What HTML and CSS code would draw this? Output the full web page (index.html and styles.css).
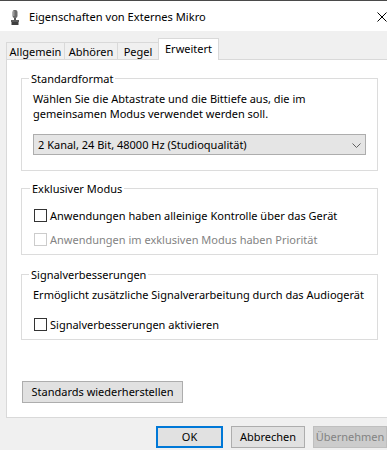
FILE: index.html
```html
<!DOCTYPE html>
<html lang="de">
<head>
<meta charset="utf-8">
<title>Eigenschaften von Externes Mikro</title>
<link rel="stylesheet" href="styles.css">
</head>
<body>
<div class="window">
  <div class="topline"></div>
  <div class="titlebar">
    <svg class="appicon" width="8" height="15" viewBox="0 0 8 15">
      <rect x="1.5" y="0" width="5" height="8" rx="2" fill="#6b6b6b"/>
      <rect x="2" y="1" width="1.5" height="5" fill="#9a9a9a"/>
      <rect x="3" y="8" width="2" height="3" fill="#555"/>
      <rect x="0" y="10" width="8" height="2" fill="#5a5a5a"/>
      <rect x="0.5" y="12" width="7" height="3" fill="#3e3e3e"/>
    </svg>
    <span class="title">Eigenschaften von Externes Mikro</span>
    <svg class="close" width="10" height="10" viewBox="0 0 10 10">
      <path d="M0.5 0.5 L9.5 9.5 M9.5 0.5 L0.5 9.5" stroke="#000" stroke-width="1" fill="none"/>
    </svg>
  </div>
  <div class="tabs">
    <div class="tab t1">Allgemein</div>
    <div class="tab t2">Abhören</div>
    <div class="tab t3">Pegel</div>
    <div class="tab t4 active">Erweitert</div>
  </div>
  <div class="panel">
    <div class="group g1">
      <div class="legend">Standardformat</div>
      <p class="desc">Wählen Sie die Abtastrate und die Bittiefe aus, die im<br>gemeinsamen Modus verwendet werden soll.</p>
      <div class="select">
        <span>2 Kanal, 24 Bit, 48000 Hz (Studioqualität)</span>
        <svg class="chev" width="9" height="5" viewBox="0 0 9 5"><path d="M0.5 0.5 L4.5 4.5 L8.5 0.5" stroke="#606060" stroke-width="1" fill="none"/></svg>
      </div>
    </div>
    <div class="group g2">
      <div class="legend">Exklusiver Modus</div>
      <div class="check first"><span class="box"></span><span>Anwendungen haben alleinige Kontrolle über das Gerät</span></div>
      <div class="check disabled"><span class="box"></span><span>Anwendungen im exklusiven Modus haben Priorität</span></div>
    </div>
    <div class="group g3">
      <div class="legend">Signalverbesserungen</div>
      <p class="desc single">Ermöglicht zusätzliche Signalverarbeitung durch das Audiogerät</p>
      <div class="check c3"><span class="box"></span><span>Signalverbesserungen aktivieren</span></div>
    </div>
    <button class="btn restore">Standards wiederherstellen</button>
  </div>
  <div class="footer">
    <button class="btn ok">OK</button>
    <button class="btn cancel">Abbrechen</button>
    <button class="btn apply" disabled>Übernehmen</button>
  </div>
</div>
</body>
</html>
```

FILE: styles.css
```css
html, body {
  margin: 0;
  padding: 0;
}
body {
  width: 387px;
  height: 450px;
  overflow: hidden;
  background: #f0f0f0;
  font-family: "Noto Sans", "Open Sans", sans-serif;
  font-size: 11px;
  color: #000;
}
.window {
  width: 387px;
  height: 450px;
  overflow: hidden;
}
.topline {
  height: 1px;
  background: #4a4a4a;
}
.titlebar {
  height: 30px;
  background: #fff;
  display: flex;
  align-items: center;
}
.appicon {
  margin-left: 11px;
  margin-top: 2px;
  flex: none;
}
.title {
  margin-left: 10px;
  font-size: 11.1px;
  flex: 1;
  white-space: nowrap;
}
.close {
  flex: none;
  margin-top: 2px;
  width: 10px;
}
.tabs {
  display: flex;
  align-items: flex-end;
  height: 20px;
  padding-top: 8px;
  margin-left: 6px;
}
.tab {
  box-sizing: border-box;
  height: 17px;
  border: 1px solid #d9d9d9;
  border-bottom: none;
  background: #f0f0f0;
  text-align: center;
  line-height: 17px;
  white-space: nowrap;
}
.t1 { width: 59px; }
.t2 { width: 54px; margin-left: -1px; }
.t3 { width: 42px; margin-left: -1px; }
.tab.active {
  width: 61px;
  margin-left: -1px;
  height: 22px;
  margin-bottom: -1px;
  background: #fff;
  position: relative;
  z-index: 1;
  line-height: 19px;
}
.panel {
  box-sizing: border-box;
  width: 420px;
  height: 359px;
  margin-left: 6px;
  background: #fff;
  border: 1px solid #d9d9d9;
  padding-left: 14px;
  overflow: hidden;
}
.group {
  box-sizing: border-box;
  width: 357px;
  border: 1px solid #dcdcdc;
  padding: 0 11px 0 11px;
}
.legend {
  width: max-content;
  height: 15px;
  line-height: 15px;
  margin: -8px 0 0 -4px;
  padding: 0 2px;
  background: #fff;
}
.desc {
  margin: 5px 0 0 0;
  line-height: 15px;
  white-space: nowrap;
}
.g1 {
  margin-top: 18px;
  padding-bottom: 15px;
}
.select {
  box-sizing: border-box;
  margin-top: 13px;
  height: 21px;
  background: #e5e5e5;
  border: 1px solid #adadad;
  display: flex;
  align-items: center;
  justify-content: space-between;
  padding: 0 4px 0 4px;
  white-space: nowrap;
}
.chev {
  margin-top: 1px;
}
.g2 {
  margin-top: 17px;
  padding-left: 12px;
  padding-bottom: 3px;
}
.check {
  height: 24px;
  display: flex;
  align-items: center;
  white-space: nowrap;
}
.check.first {
  margin-top: 7px;
}
.box {
  box-sizing: border-box;
  width: 13px;
  height: 13px;
  border: 1px solid #333;
  background: #fff;
  margin-right: 3px;
  flex: none;
}
.check.disabled {
  color: #838383;
}
.check.disabled .box {
  border-color: #cccccc;
}
.g3 {
  margin-top: 19px;
  padding-bottom: 3px;
}
.g3 .check {
  padding-left: 1px;
}
.c3 {
  margin-top: 10px;
}
.btn {
  box-sizing: border-box;
  font-family: "Noto Sans", "Open Sans", sans-serif;
  font-size: 11px;
  color: #000;
  background: #e1e1e1;
  border: 1px solid #adadad;
  border-radius: 0;
  padding: 0;
  margin: 0;
  height: 22px;
  line-height: 18px;
  white-space: nowrap;
}
.restore {
  display: block;
  margin-top: 41px;
  margin-left: 1px;
  width: 161px;
}
.footer {
  display: flex;
  gap: 8px;
  padding-left: 156px;
  margin-top: 8px;
}
.ok {
  width: 73px;
  border: 2px solid #0078d7;
}
.cancel {
  width: 74px;
  flex: none;
}
.apply {
  width: 74px;
  flex: none;
  background: #cccccc;
  border-color: #bfbfbf;
  color: #838383;
}
```
